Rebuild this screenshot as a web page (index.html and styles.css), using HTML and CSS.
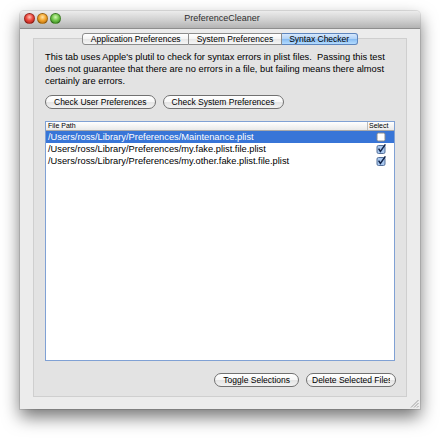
FILE: index.html
```html
<!DOCTYPE html>
<html>
<head>
<meta charset="utf-8">
<title>PreferenceCleaner</title>
<link rel="stylesheet" href="styles.css">
</head>
<body>
<div class="stage">
  <div class="window">
    <div class="titlebar">
      <div class="lights">
        <span class="light red"></span>
        <span class="light yellow"></span>
        <span class="light green"></span>
      </div>
      <div class="title">PreferenceCleaner</div>
      <div></div>
    </div>
    <div class="content">
      <div class="tabs">
        <div class="tab first">Application Preferences</div>
        <div class="tab">System Preferences</div>
        <div class="tab selected last">Syntax Checker</div>
      </div>
      <div class="tabbox">
        <p class="desc">This tab uses Apple's plutil to check for syntax errors in plist files.&nbsp; Passing this test<br>does not guarantee that there are no errors in a file, but failing means there almost<br>certainly are errors.</p>
        <div class="btnrow">
          <button class="btn">Check User Preferences</button>
          <button class="btn">Check System Preferences</button>
        </div>
        <div class="table">
          <div class="thead">
            <div class="th path">File Path</div>
            <div class="th sel">Select</div>
          </div>
          <div class="row selected">
            <div class="cell path">/Users/ross/Library/Preferences/Maintenance.plist</div>
            <div class="cell sel">
              <svg class="cb" width="10" height="10" viewBox="0 0 10 10"><rect x="1" y="1" width="8" height="8" rx="1.5" fill="#ffffff" stroke="#8a8a8a"/></svg>
            </div>
          </div>
          <div class="row">
            <div class="cell path">/Users/ross/Library/Preferences/my.fake.plist.file.plist</div>
            <div class="cell sel">
              <svg class="cb" width="10" height="10" viewBox="0 0 10 10"><rect x="1" y="1.5" width="8" height="8" rx="1.5" fill="#a9c8ef" stroke="#55709a"/><path d="M2.6 4.6 L4.4 7.4 L9.4 0.4" fill="none" stroke="#10234a" stroke-width="1.5"/></svg>
            </div>
          </div>
          <div class="row">
            <div class="cell path">/Users/ross/Library/Preferences/my.other.fake.plist.file.plist</div>
            <div class="cell sel">
              <svg class="cb" width="10" height="10" viewBox="0 0 10 10"><rect x="1" y="1.5" width="8" height="8" rx="1.5" fill="#a9c8ef" stroke="#55709a"/><path d="M2.6 4.6 L4.4 7.4 L9.4 0.4" fill="none" stroke="#10234a" stroke-width="1.5"/></svg>
            </div>
          </div>
        </div>
        <div class="btnrow bottom">
          <button class="btn">Toggle Selections</button>
          <button class="btn clip"><span>Delete Selected Files</span></button>
        </div>
      </div>
    </div>
    <svg class="grip" width="9" height="9" viewBox="0 0 9 9"><path d="M8.5 1 L1 8.5 M8.5 4 L4 8.5 M8.5 7 L7 8.5" stroke="#a0a0a0" stroke-width="1"/></svg>
  </div>
</div>
</body>
</html>
```
FILE: styles.css
```css
* { box-sizing: border-box; }

body {
  margin: 0;
  background: #ffffff;
  font-family: "Liberation Sans", Arial, sans-serif;
  color: #000;
}

.stage {
  width: 440px;
  height: 440px;
  padding: 11px 20px 0;
}

.window {
  position: relative;
  width: 400px;
  height: 398px;
  background: #ececec;
  border-radius: 4px 4px 0 0;
  box-shadow: 0 8px 17px rgba(0, 0, 0, 0.55), 0 0 0 1px rgba(0, 0, 0, 0.1);
  display: flex;
  flex-direction: column;
}

.titlebar {
  height: 18px;
  padding: 0 0 3px 4px;
  border-bottom: 1px solid #8e8e8e;
  border-radius: 4px 4px 0 0;
  background: linear-gradient(#ececec, #cfcfcf 55%, #b3b3b3);
  display: grid;
  grid-template-columns: 1fr auto 1fr;
  align-items: center;
}

.lights {
  display: flex;
  gap: 2px;
}

.light {
  width: 11px;
  height: 11px;
  border-radius: 50%;
  border: 1px solid rgba(0, 0, 0, 0.28);
}

.red { background: radial-gradient(circle at 50% 35%, #ffc0b4 0, #ec4a3f 45%, #a3150d 100%); }
.yellow { background: radial-gradient(circle at 50% 35%, #ffe6a8 0, #f3a52f 45%, #b06400 100%); }
.green { background: radial-gradient(circle at 50% 35%, #d4f7b0 0, #72c74c 45%, #2c7a14 100%); }

.title {
  font-size: 9px;
  line-height: 12px;
  color: #2e2e2e;
}

.content {
  flex: 1;
  padding: 4px 13px 12px;
  display: flex;
  flex-direction: column;
}

.tabs {
  position: relative;
  z-index: 1;
  display: flex;
  justify-content: center;
  height: 12px;
}

.tab {
  height: 12px;
  padding: 0 7.5px;
  font-size: 8.5px;
  line-height: 10px;
  border: 1px solid #8c8c8c;
  border-left: none;
  background: linear-gradient(#ffffff, #f4f4f4 50%, #e6e6e6 51%, #f6f6f6);
  white-space: nowrap;
}

.tab.first {
  border-left: 1px solid #8c8c8c;
  border-radius: 3px 0 0 3px;
}

.tab.last {
  border-radius: 0 3px 3px 0;
}

.tab.selected {
  border-color: #5f86bd;
  background: linear-gradient(#d6e8fc, #afd1f7 50%, #86bbf2 51%, #b4dcff);
}

.tabbox {
  flex: 1;
  margin-top: -7px;
  padding: 12px 11px 9px;
  border: 1px solid #cfcfcf;
  background: #e3e3e3;
  display: flex;
  flex-direction: column;
}

.desc {
  margin: 0;
  font-size: 9.3px;
  line-height: 12px;
  white-space: nowrap;
}

.btnrow {
  display: flex;
  gap: 7px;
  margin-top: 8px;
}

.btnrow.bottom {
  justify-content: flex-end;
  margin-top: 12px;
  margin-right: -1px;
}

.btn {
  height: 14px;
  padding: 0 8px;
  margin: 0;
  font-family: "Liberation Sans", Arial, sans-serif;
  font-size: 8.5px;
  line-height: 12px;
  color: #000;
  border: 1px solid #717171;
  border-radius: 7px;
  background: linear-gradient(#ffffff, #f6f6f6 50%, #e4e4e4 51%, #f2f2f2);
  white-space: nowrap;
}

.btn.clip {
  width: 90px;
  padding: 0 5px;
  text-align: left;
}

.btn.clip span {
  display: block;
  overflow: hidden;
}

.table {
  flex: 1;
  margin-top: 12px;
  border: 1px solid #80a1d4;
  background: #ffffff;
  display: flex;
  flex-direction: column;
}

.thead {
  display: grid;
  grid-template-columns: 1fr 27px;
  height: 9px;
  border-bottom: 1px solid #a9a9a9;
  background: linear-gradient(#ffffff, #e9e9e9);
  font-size: 7px;
  line-height: 8px;
}

.th.path {
  padding-left: 2px;
}

.th.sel {
  padding-left: 1px;
  border-left: 1px solid #bdbdbd;
}

.row {
  display: grid;
  grid-template-columns: 1fr 27px;
  height: 12px;
  font-size: 9.3px;
  line-height: 12px;
}

.row.selected {
  background: #3875d7;
  color: #ffffff;
}

.cell.path {
  padding-left: 2px;
  white-space: nowrap;
  overflow: hidden;
}

.cell.sel {
  display: flex;
  justify-content: center;
  align-items: center;
}

.cb {
  display: block;
}

.grip {
  position: absolute;
  right: 1px;
  bottom: 1px;
}
```
